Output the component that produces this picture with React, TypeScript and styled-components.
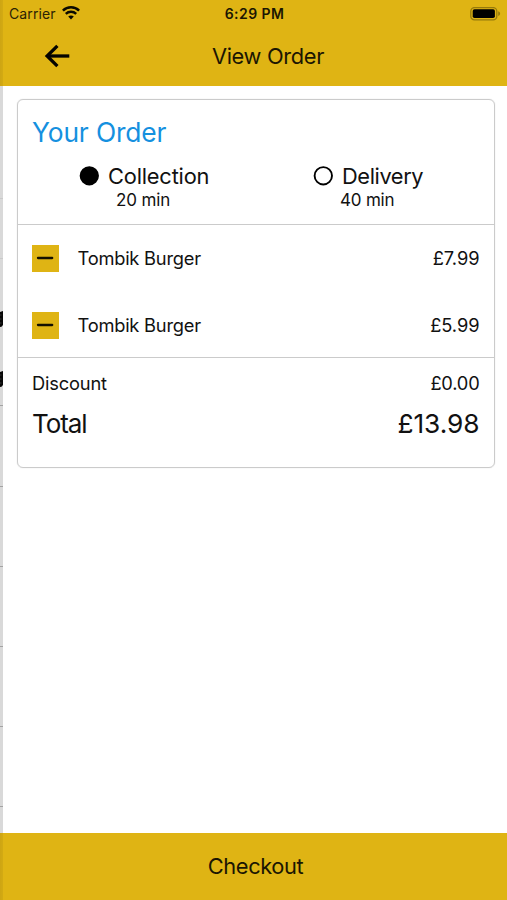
import React from "react";
import styled, { createGlobalStyle } from "styled-components";

const GOLD = "#dfb414";
const RULE = "#cbcbcb";

const GlobalStyle = createGlobalStyle`
  *, *::before, *::after { box-sizing: border-box; }
  body { margin: 0; background: #fff; }
`;

const Viewport = styled.div`
  display: grid;
  grid-template-columns: 3px 1fr;
  width: 507px;
  height: 900px;
  overflow: hidden;
  font-family: Inter, "Liberation Sans", sans-serif;
  color: #111;
  background: #fff;
`;

const PreviousScreen = styled.aside`
  display: flex;
  flex-direction: column;
  overflow: hidden;
  background: #d9d9d9;
`;

const EdgeBar = styled.div<{ $height: number }>`
  flex: none;
  height: ${(p) => p.$height}px;
  background: linear-gradient(90deg, #cda513, #d3aa13);
`;

const EdgeRow = styled.div<{ $height: number; $line?: string }>`
  flex: none;
  height: ${(p) => p.$height}px;
  border-bottom: 1px solid ${(p) => p.$line ?? "#a3a3a3"};
`;

const EdgeIcons = styled.div`
  flex: none;
  display: flex;
  flex-direction: column;
  gap: 44px;
  height: 147px;
  padding-top: 52px;
  border-bottom: 1px solid #a3a3a3;
`;

const EdgeIcon = styled.svg`
  display: block;
  width: 3px;
  height: 16px;
`;

const Screen = styled.main`
  display: flex;
  flex-direction: column;
  min-width: 0;
  background: #fff;
`;

const Header = styled.header`
  flex: none;
  height: 86px;
  background: ${GOLD};
`;

const StatusBar = styled.div`
  display: grid;
  grid-template-columns: 1fr auto 1fr;
  align-items: center;
  height: 27px;
  padding: 0 7px 0 6px;
`;

const TitleBar = styled.div`
  display: grid;
  grid-template-columns: 1fr auto 1fr;
  align-items: center;
  height: 40px;
  margin-top: 9px;
  padding: 0 7px 0 33px;
`;

const Carrier = styled.div`
  display: flex;
  align-items: center;
  gap: 6px;
`;

const Label = styled.span<{ $size: number; $spacing?: number; $weight?: number; $color?: string; $line?: number }>`
  font-size: ${(p) => p.$size}px;
  letter-spacing: ${(p) => p.$spacing ?? 0}px;
  font-weight: ${(p) => p.$weight ?? 400};
  color: ${(p) => p.$color ?? "inherit"};
  line-height: ${(p) => (p.$line ? `${p.$line}px` : "1.2")};
  white-space: nowrap;
`;

const StatusText = styled(Label)`
  padding-top: 2px;
`;

const Battery = styled.svg`
  justify-self: end;
  display: block;
  margin-right: -1px;
`;

const BackButton = styled.button`
  justify-self: start;
  display: flex;
  margin: 0 0 0 8px;
  padding: 0;
  border: 0;
  background: none;
`;

const Content = styled.section`
  flex: 1;
  padding: 13px 12px 0 14px;
`;

const Card = styled.article`
  height: 369px;
  border: 1px solid ${RULE};
  border-radius: 6px;
  box-shadow: 0 0 1px rgba(0, 0, 0, 0.22);
`;

const Choices = styled.div`
  height: 125px;
  padding: 16px 14px 0;
  border-bottom: 1px solid ${RULE};
`;

const Options = styled.div`
  display: grid;
  grid-template-columns: 234px 1fr;
  margin-top: 12px;
  padding-left: 47px;
`;

const Option = styled.div`
  display: grid;
  grid-template-columns: 20px auto;
  justify-content: start;
  align-items: center;
  column-gap: 9px;
`;

const Minutes = styled.div<{ $indent: number }>`
  grid-column: 1 / -1;
  display: flex;
  padding-left: ${(p) => p.$indent}px;
`;

const Items = styled.div`
  height: 133px;
  border-bottom: 1px solid ${RULE};
`;

const ItemRow = styled.div`
  display: grid;
  grid-template-columns: 28px 1fr auto;
  align-items: center;
  column-gap: 18px;
  height: 67px;
  padding: 0 14.5px 0 13.5px;
`;

const RemoveButton = styled.button`
  display: flex;
  align-items: center;
  justify-content: center;
  width: 27.5px;
  height: 27px;
  padding: 0 1px 1px 0;
  border: 0;
  background: ${GOLD};
`;

const Totals = styled.div`
  padding: 12px 14.5px 0 14px;
`;

const TotalRow = styled.div<{ $height: number }>`
  display: flex;
  align-items: center;
  justify-content: space-between;
  height: ${(p) => p.$height}px;
`;

const Checkout = styled.button`
  flex: none;
  display: flex;
  align-items: center;
  justify-content: center;
  height: 67px;
  padding: 0 0 0 1px;
  border: 0;
  font-family: inherit;
  color: #1b1602;
  background: ${GOLD};
`;

const WifiIcon = () => (
  <svg width="18" height="14" viewBox="0 0 18 14" fill="none" stroke="#0c0a00">
    <path d="M0.9 4.7C5.4 0.2 12.6 0.2 17.1 4.7" strokeWidth="2.5" />
    <path d="M3.8 7.8C6.7 5 11.3 5 14.2 7.8" strokeWidth="2.4" />
    <path d="M9 13.4L6.2 10.5C7.8 9 10.2 9 11.8 10.5Z" fill="#0c0a00" stroke="none" />
  </svg>
);

const BatteryIcon = () => (
  <Battery width="31" height="14" viewBox="0 0 31 14">
    <rect x="0.8" y="0.6" width="26" height="12.2" rx="3.6" fill="none" stroke="#967a0c" strokeWidth="1.3" />
    <rect x="2.7" y="2.3" width="22.2" height="8.8" rx="1.8" fill="#000" />
    <path d="M28.2 4.3C30.8 5.2 30.8 8.2 28.2 9.1Z" fill="#967a0c" />
  </Battery>
);

const ArrowIcon = () => (
  <svg width="26" height="24" viewBox="0 0 26 24" fill="none" stroke="#050400" strokeWidth="3.3">
    <path d="M25.3 12H3" />
    <path d="M13.4 1.8L3.1 12L13.4 22.2" />
  </svg>
);

const RadioIcon = ({ checked }: { checked?: boolean }) => (
  <svg width="20" height="20" viewBox="0 0 20 20">
    <circle cx="10.3" cy="9.8" r="8.7" fill={checked ? "#000" : "none"} stroke="#000" strokeWidth="1.9" />
  </svg>
);

const MinusIcon = () => (
  <svg width="18" height="4" viewBox="0 0 18 4">
    <path d="M2 2H16.2" stroke="#141000" strokeWidth="2.3" strokeLinecap="round" />
  </svg>
);

const items = [
  { name: "Tombik Burger", price: "£7.99" },
  { name: "Tombik Burger", price: "£5.99" },
];

export default function App() {
  return (
    <>
      <GlobalStyle />
      <Viewport>
        <PreviousScreen aria-hidden>
          <EdgeBar $height={86} />
          <EdgeRow $height={113} $line="#cacaca" />
          <EdgeRow $height={60} $line="#cacaca" />
          <EdgeIcons>
            {[0, 1].map((key) => (
              <EdgeIcon key={key} viewBox="0 0 3 16">
                <path d="M0 1L3 0V14L1.5 15.8L0 16Z" fill="#080808" />
                <path d="M0 4H1.5M0 8H1.5M0 12H1.5" stroke="#444" strokeWidth="0.8" />
              </EdgeIcon>
            ))}
          </EdgeIcons>
          <EdgeRow $height={81} />
          {[80, 80, 80, 80].map((height, index) => (
            <EdgeRow key={index} $height={height} />
          ))}
          <EdgeRow $height={26} $line="#d9d9d9" />
          <EdgeBar $height={67} />
        </PreviousScreen>
        <Screen>
          <Header>
            <StatusBar>
              <Carrier>
                <StatusText $size={14} $spacing={0.1} $color="#2b2304">Carrier</StatusText>
                <WifiIcon />
              </Carrier>
              <StatusText $size={14} $spacing={0.45} $weight={600} $color="#1b1602">6:29 PM</StatusText>
              <BatteryIcon />
            </StatusBar>
            <TitleBar>
              <BackButton aria-label="Back"><ArrowIcon /></BackButton>
              <Label $size={21.8} $spacing={-0.33} $color="#1b1602">View Order</Label>
            </TitleBar>
          </Header>
          <Content>
            <Card>
              <Choices>
                <Label as="div" $size={26.4} $spacing={-0.15} $line={32} $color="#1590df">Your Order</Label>
                <Options>
                  <Option>
                    <RadioIcon checked />
                    <Label $size={21.8} $spacing={-0.18} $line={32}>Collection</Label>
                    <Minutes $indent={37}><Label $size={17} $spacing={-0.15} $line={17}>20 min</Label></Minutes>
                  </Option>
                  <Option>
                    <RadioIcon />
                    <Label $size={21.8} $spacing={-0.4} $line={32}>Delivery</Label>
                    <Minutes $indent={27}><Label $size={17} $spacing={-0.2} $line={17}>40 min</Label></Minutes>
                  </Option>
                </Options>
              </Choices>
              <Items>
                {items.map((item) => (
                  <ItemRow key={item.price}>
                    <RemoveButton aria-label="Remove item"><MinusIcon /></RemoveButton>
                    <Label $size={18.3} $spacing={-0.22}>{item.name}</Label>
                    <Label $size={18.3} $spacing={-0.05}>{item.price}</Label>
                  </ItemRow>
                ))}
              </Items>
              <Totals>
                <TotalRow $height={27}>
                  <Label $size={18.3} $spacing={-0.17}>Discount</Label>
                  <Label $size={18.3} $spacing={-0.2}>£0.00</Label>
                </TotalRow>
                <TotalRow $height={54}>
                  <Label $size={26} $spacing={-1.1}>Total</Label>
                  <Label $size={26.3} $spacing={-0.05}>£13.98</Label>
                </TotalRow>
              </Totals>
            </Card>
          </Content>
          <Checkout><Label $size={21.8} $spacing={-0.4}>Checkout</Label></Checkout>
        </Screen>
      </Viewport>
    </>
  );
}
